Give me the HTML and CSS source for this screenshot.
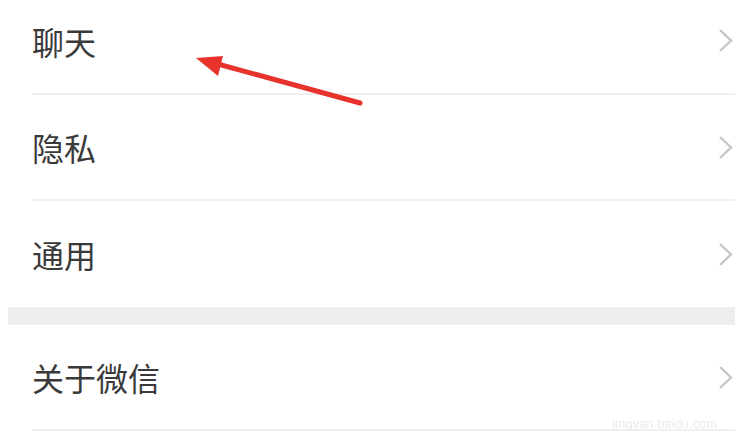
FILE: index.html
```html
<!DOCTYPE html>
<html lang="zh-CN">
<head>
  <meta charset="UTF-8">
  <meta name="viewport" content="width=device-width, initial-scale=1.0">
  <title>设置</title>
  <link rel="stylesheet" href="styles.css">
</head>
<body>
  <div class="page">
    <div class="group">
      <div class="cell cell-first">
        <div class="cell-body">
          <span class="cell-title">聊天</span>
          <svg class="chevron" width="15" height="25" viewBox="0 0 15 25"><polyline points="2,2 13,12.5 2,23"></polyline></svg>
        </div>
      </div>
      <div class="cell">
        <div class="cell-body">
          <span class="cell-title">隐私</span>
          <svg class="chevron" width="15" height="25" viewBox="0 0 15 25"><polyline points="2,2 13,12.5 2,23"></polyline></svg>
        </div>
      </div>
      <div class="cell">
        <div class="cell-body no-line">
          <span class="cell-title">通用</span>
          <svg class="chevron" width="15" height="25" viewBox="0 0 15 25"><polyline points="2,2 13,12.5 2,23"></polyline></svg>
        </div>
      </div>
    </div>

    <div class="spacer"></div>

    <div class="group">
      <div class="cell">
        <div class="cell-body">
          <span class="cell-title">关于微信</span>
          <svg class="chevron" width="15" height="25" viewBox="0 0 15 25"><polyline points="2,2 13,12.5 2,23"></polyline></svg>
        </div>
      </div>
    </div>

    <!-- annotation arrow drawn over the list -->
    <svg class="arrow" width="735" height="439" viewBox="0 0 735 439">
      <line x1="360" y1="103" x2="214" y2="63"></line>
      <polygon points="196,58 223,56 218,76"></polygon>
    </svg>

    <div class="watermark">jingyan.baidu.com</div>
  </div>
</body>
</html>
```

FILE: styles.css
```css
:root {
  --text-color: #3a3a3a;
  --line-color: #efefef;
  --band-color: #eeeeee;
  --chevron-color: #c6c6c6;
  --arrow-color: #e8332c;
}

* {
  margin: 0;
  padding: 0;
  box-sizing: border-box;
}

body {
  background-color: #ffffff;
  font-family: 'Noto Sans CJK SC', 'Noto Sans', sans-serif;
  color: var(--text-color);
  overflow: hidden;
}

.page {
  position: relative;
  width: 735px;
  height: 439px;
}

.cell {
  padding-left: 32px;
  height: 106px;
}

.cell-first {
  height: 95px;
}

.cell-body {
  height: 100%;
  display: flex;
  align-items: center;
  justify-content: space-between;
  padding-right: 2px;
  border-bottom: 2px solid var(--line-color);
}

.cell-first .cell-body {
  padding-bottom: 12px;
}

.cell-body.no-line {
  border-bottom: none;
}

.cell-title {
  font-size: 32px;
  line-height: 1;
}

.chevron {
  fill: none;
  stroke: var(--chevron-color);
  stroke-width: 2.4;
}

.spacer {
  height: 18px;
  margin-left: 8px;
  background-color: var(--band-color);
}

.arrow {
  position: absolute;
  left: 0;
  top: 0;
  pointer-events: none;
}

.arrow line {
  stroke: var(--arrow-color);
  stroke-width: 5;
  stroke-linecap: round;
}

.arrow polygon {
  fill: var(--arrow-color);
}

.watermark {
  position: absolute;
  right: 18px;
  bottom: 8px;
  font-family: 'Liberation Sans', sans-serif;
  font-size: 13px;
  color: #ececec;
}
```
